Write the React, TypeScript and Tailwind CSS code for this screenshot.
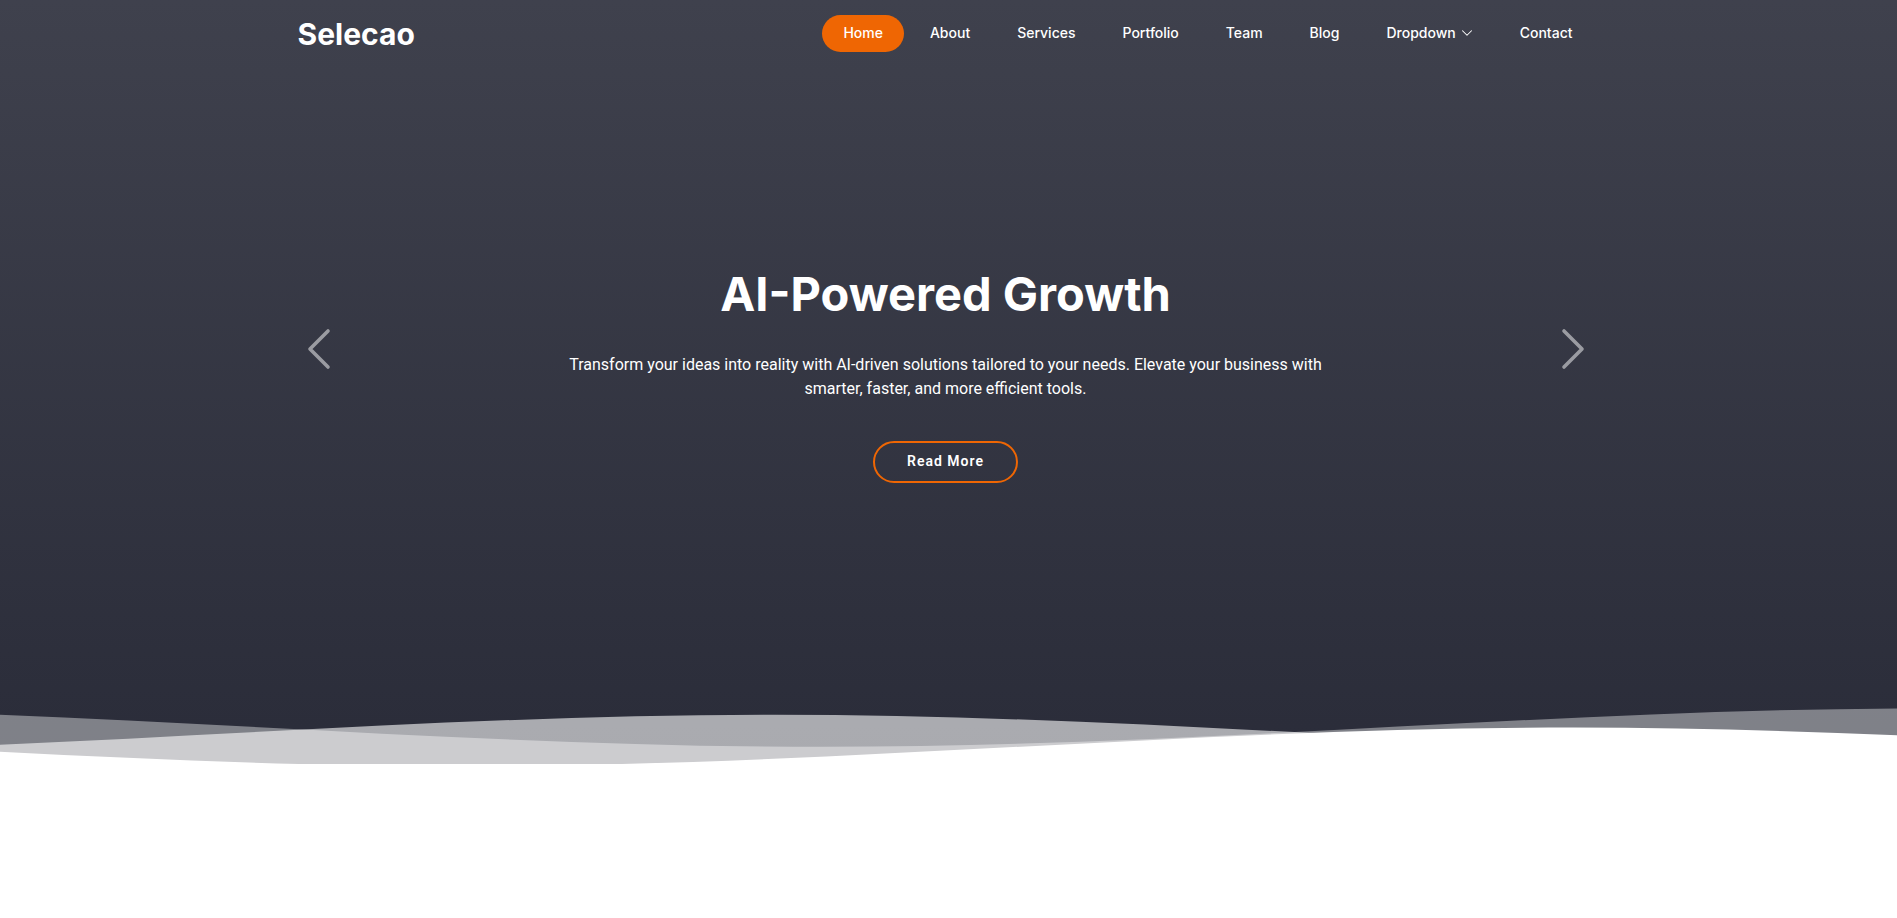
const links = ["Home", "About", "Services", "Portfolio", "Team", "Blog", "Dropdown", "Contact"];

const wave = "M-160 44c30 0 58-18 88-18s58 18 88 18 58-18 88-18 58 18 88 18v44h-352z";

function Header() {
  return (
    <header className="flex w-full max-w-[1320px] items-center justify-between px-3 py-[15px]">
      <a href="#home" className="font-['Inter','Open_Sans',sans-serif] text-[30px] leading-[34px] font-bold">
        Selecao
      </a>
      <nav aria-label="Main">
        <ul className="flex gap-[5px]">
          {links.map((label) => (
            <li key={label}>
              <a
                href={"#" + label.toLowerCase()}
                className={
                  "flex items-center gap-[5px] rounded-full px-[21px] pt-[7px] pb-[9px] font-['Inter','Open_Sans',sans-serif] text-sm leading-[21px] font-medium " +
                  (label === "Home" ? "bg-[#ef6603]" : "")
                }
              >
                {label}
                {label === "Dropdown" && (
                  <svg viewBox="0 0 16 16" className="mt-px size-3" fill="none" stroke="currentColor" strokeWidth="1.4" strokeLinecap="round" strokeLinejoin="round" aria-hidden="true">
                    <path d="M2 5l6 6 6-6" />
                  </svg>
                )}
              </a>
            </li>
          ))}
        </ul>
      </nav>
    </header>
  );
}

function Arrow({ label, path }: { label: string; path: string }) {
  return (
    <button type="button" aria-label={label} className="flex w-12 shrink-0 justify-center opacity-50">
      <svg viewBox="0 0 16 16" className="size-12" fill="none" stroke="currentColor" strokeWidth="1.2" strokeLinecap="round" strokeLinejoin="round" aria-hidden="true">
        <path d={path} />
      </svg>
    </button>
  );
}

function Waves() {
  return (
    <svg viewBox="0 24 150 28" preserveAspectRatio="none" className="block h-[60px] w-full" fill="#fff" aria-hidden="true">
      <path d={wave} transform="translate(49.1 0)" fillOpacity="0.4" />
      <path d={wave} transform="translate(133.2 3)" fillOpacity="0.6" />
      <path d={wave} transform="translate(20.4 9)" />
    </svg>
  );
}

export default function App() {
  return (
    <div className="min-h-screen bg-white">
      <section id="home" className="bg-linear-to-b from-[#3f414d] to-[#2a2c39] text-white">
        <div className="flex flex-col items-center pr-[6px]">
          <Header />
          <div className="flex w-full max-w-[1320px] items-center justify-between px-[9px] pt-[148px] pb-[221px]">
            <Arrow label="Previous" path="M11 2L5 8l6 6" />
            <div className="flex max-w-[800px] flex-col items-center pt-[50px] text-center">
              <h2 className="font-['Inter','Open_Sans',sans-serif] text-[47px] leading-[58px] font-bold">AI-Powered Growth</h2>
              <p className="mt-[30px] max-w-[780px] font-['Roboto',sans-serif] text-base leading-6">
                Transform your ideas into reality with AI-driven solutions tailored to your needs. Elevate your business with
                smarter, faster, and more efficient tools.
              </p>
              <a
                href="#about"
                className="mt-10 rounded-full border-2 border-[#ef6603] px-8 pt-2 pb-[10px] font-['Roboto',sans-serif] text-sm leading-5 font-semibold tracking-[1px]"
              >
                Read More
              </a>
            </div>
            <Arrow label="Next" path="M5 2l6 6-6 6" />
          </div>
        </div>
        <Waves />
      </section>
    </div>
  );
}
